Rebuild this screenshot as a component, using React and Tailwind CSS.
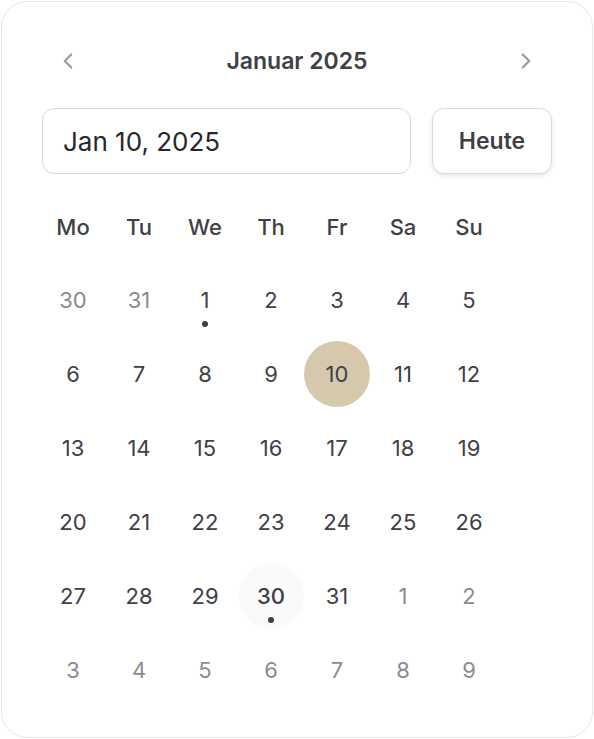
import { ChevronLeft, ChevronRight } from 'lucide-react';

const weekdays = ['Mo', 'Tu', 'We', 'Th', 'Fr', 'Sa', 'Su'];

function buildDays() {
  const days = [];
  days.push({ d: 30, out: true }, { d: 31, out: true });
  for (let i = 1; i <= 31; i++) days.push({ d: i });
  for (let i = 1; i <= 9; i++) days.push({ d: i, out: true });
  return days;
}

function DayCell({ day }) {
  const selected = !day.out && day.d === 10;
  const today = !day.out && day.d === 30;
  const dot = !day.out && (day.d === 1 || day.d === 30);

  return (
    <div className="h-[74px] flex items-center justify-center">
      <div
        className={
          'relative w-[66px] h-[66px] rounded-full flex items-center justify-center text-[22px] ' +
          (selected ? 'bg-[#d6c8ad] ' : '') +
          (today ? 'bg-[#fafafa] font-medium ' : '') +
          (day.out ? 'text-[#8b8b8f]' : 'text-[#404046]')
        }
      >
        {day.d}
        {dot && <span className="absolute left-1/2 top-[54px] -translate-x-1/2 w-[6px] h-[6px] rounded-full bg-[#3f3f46]" />}
      </div>
    </div>
  );
}

export default function App() {
  const days = buildDays();

  return (
    <div className="p-px bg-white" style={{ fontFamily: 'Inter, "Noto Sans", sans-serif' }}>
      <div className="w-[592px] h-[737px] border border-[#e6e6e6] rounded-[26px] bg-white px-10 pt-[38px]">
        <div className="flex items-center justify-between h-[42px]">
          <button className="w-[52px] h-[42px] flex items-center justify-center text-[#9a9a9e]">
            <ChevronLeft size={26} strokeWidth={2} />
          </button>
          <h2 className="text-[23px] font-semibold text-[#404046]">Januar 2025</h2>
          <button className="w-[52px] h-[42px] flex items-center justify-center text-[#9a9a9e]">
            <ChevronRight size={26} strokeWidth={2} />
          </button>
        </div>

        <div className="flex mt-[26px] gap-[21px]">
          <div className="w-[369px] h-[66px] border border-[#d9d9d9] rounded-xl flex items-center pl-5 text-[26px] text-[#27272a]">
            Jan 10, 2025
          </div>
          <button className="w-[120px] h-[66px] border border-[#d9d9d9] rounded-xl shadow-[0_2px_4px_rgba(0,0,0,0.1)] text-[23px] font-semibold text-[#404046]">
            Heute
          </button>
        </div>

        <div className="-ml-0.5 w-[462px]">
          <div className="grid grid-cols-7 mt-[33px] h-10 items-center">
            {weekdays.map((w) => (
              <div key={w} className="text-center text-[22px] font-medium text-[#404046]">
                {w}
              </div>
            ))}
          </div>
          <div className="grid grid-cols-7 mt-4">
            {days.map((day, i) => (
              <DayCell key={i} day={day} />
            ))}
          </div>
        </div>
      </div>
    </div>
  );
}
